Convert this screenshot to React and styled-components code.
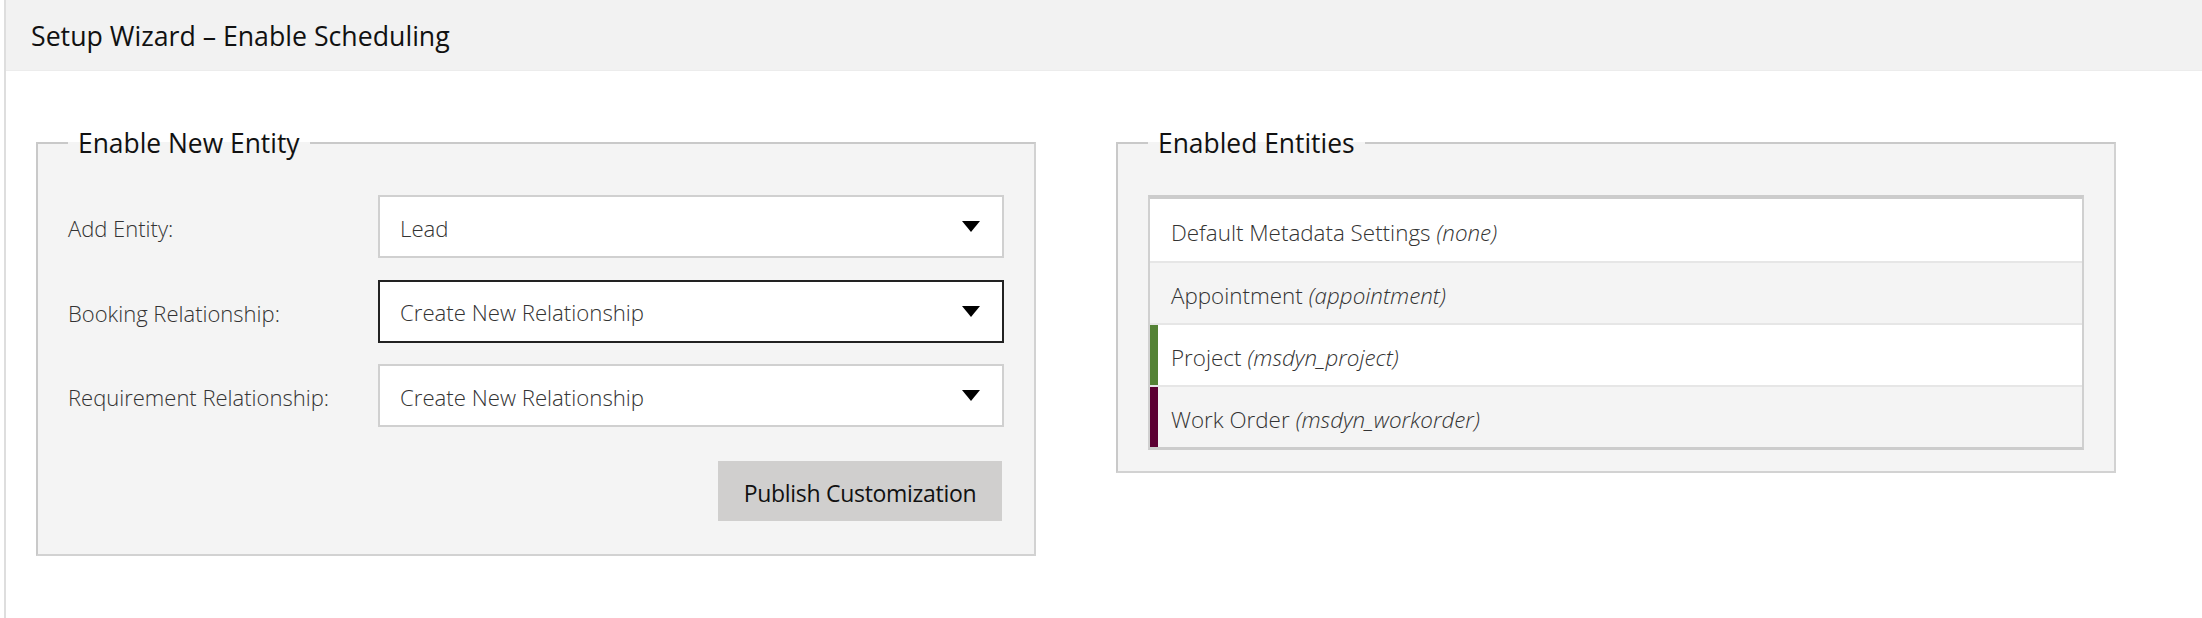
import React from "react";
import styled, { createGlobalStyle } from "styled-components";

const GlobalStyle = createGlobalStyle`
  html, body { margin: 0; padding: 0; background: #ffffff; }
  body { font-family: "Open Sans", "Noto Sans", Arial, sans-serif; color: #222; }
  * { box-sizing: border-box; }
`;

const Shell = styled.div`
  margin-left: 4px;
  border-left: 2px solid #dedede;
  min-height: 100vh;
  background: #ffffff;
`;

const Header = styled.header`
  height: 71px;
  background: #f2f2f2;
  border-bottom: 1px solid #ececec;
  display: flex;
  align-items: center;
  padding: 2px 0 0 25px;
`;

const Title = styled.h1`
  margin: 0;
  font-size: 26.7px;
  font-weight: 400;
  color: #111;
  line-height: 1;
`;

const Main = styled.main`
  display: flex;
  align-items: flex-start;
  gap: 80px;
  padding: 54px 0 0 30px;
`;

const Panel = styled.fieldset`
  margin: 0;
  width: 1000px;
  min-width: 0;
  background: #f4f4f4;
  border: 2px solid #c9c9c9;
  border-right-color: #d2d2d2;
  border-bottom-color: #d2d2d2;
  padding: 34px 30px ${(p) => p.$bottom}px 30px;
`;

const Legend = styled.legend`
  font-size: 26.4px;
  line-height: 36px;
  font-weight: 400;
  color: #111;
  padding: 0 10px;
`;

const FormGrid = styled.div`
  display: grid;
  grid-template-columns: 310px 1fr;
  row-gap: 21.5px;
  align-items: center;
`;

const Label = styled.label`
  padding-top: 3px;
  font-size: 22px;
  font-weight: 300;
  color: #333;
`;

const SelectBox = styled.div`
  height: 63px;
  background: #fff;
  border: 2px solid ${(p) => (p.$focused ? "#222" : "#d0d0d0")};
  display: flex;
  align-items: center;
  justify-content: space-between;
  padding: 0 22px 0 20px;
  font-size: 22.2px;
  font-weight: 300;
  color: #333;
`;

const SelectText = styled.span`
  padding-top: 3px;
`;

const Arrow = styled.svg`
  width: 18px;
  height: 11px;
  flex: none;
`;

const Actions = styled.div`
  display: flex;
  justify-content: flex-end;
  margin-top: 34px;
  padding-right: 2px;
`;

const Button = styled.button`
  width: 284px;
  height: 60px;
  border: none;
  padding: 3px 0 0;
  background: #d0cfce;
  font-family: "Open Sans", "Noto Sans", Arial, sans-serif;
  font-size: 23px;
  letter-spacing: -0.3px;
  color: #111;
  cursor: pointer;
`;

const List = styled.ul`
  list-style: none;
  margin: 0;
  padding: 0;
  border: 2px solid #d0d0d0;
  border-top: 4px solid #cccccc;
  border-bottom: 3px solid #cccccc;
`;

const Row = styled.li`
  height: 62px;
  display: flex;
  align-items: center;
  padding: 5px 0 0 21px;
  font-size: 22.4px;
  font-weight: 300;
  color: #333;
  background: ${(p) => (p.$alt ? "#f4f4f4" : "#ffffff")};
  box-shadow: ${(p) => (p.$bar ? `inset 8px 0 0 ${p.$bar}` : "none")};
  border-bottom: 2px solid #e6e6e6;
  &:first-child { height: 64px; }
  &:last-child { height: 60px; border-bottom: none; }
`;

const Logical = styled.em`
  font-style: italic;
  margin-left: 6px;
`;

const DownArrow = () => (
  <Arrow viewBox="0 0 18 11">
    <polygon points="0,0 18,0 9,11" fill="#000" />
  </Arrow>
);

const fields = [
  { label: "Add Entity:", value: "Lead" },
  { label: "Booking Relationship:", value: "Create New Relationship", focused: true },
  { label: "Requirement Relationship:", value: "Create New Relationship" },
];

const entities = [
  { name: "Default Metadata Settings", logical: "(none)" },
  { name: "Appointment", logical: "(appointment)", alt: true },
  { name: "Project", logical: "(msdyn_project)", bar: "#548235" },
  { name: "Work Order", logical: "(msdyn_workorder)", alt: true, bar: "#5c0033" },
];

export default function App() {
  return (
    <>
      <GlobalStyle />
      <Shell>
        <Header>
          <Title>Setup Wizard – Enable Scheduling</Title>
        </Header>
        <Main>
          <Panel $bottom={33}>
            <Legend>Enable New Entity</Legend>
            <FormGrid>
              {fields.map((f) => (
                <React.Fragment key={f.label}>
                  <Label>{f.label}</Label>
                  <SelectBox $focused={f.focused}>
                    <SelectText>{f.value}</SelectText>
                    <DownArrow />
                  </SelectBox>
                </React.Fragment>
              ))}
            </FormGrid>
            <Actions>
              <Button>Publish Customization</Button>
            </Actions>
          </Panel>
          <Panel $bottom={21}>
            <Legend>Enabled Entities</Legend>
            <List>
              {entities.map((e) => (
                <Row key={e.name} $alt={e.alt} $bar={e.bar}>
                  {e.name}
                  <Logical>{e.logical}</Logical>
                </Row>
              ))}
            </List>
          </Panel>
        </Main>
      </Shell>
    </>
  );
}
